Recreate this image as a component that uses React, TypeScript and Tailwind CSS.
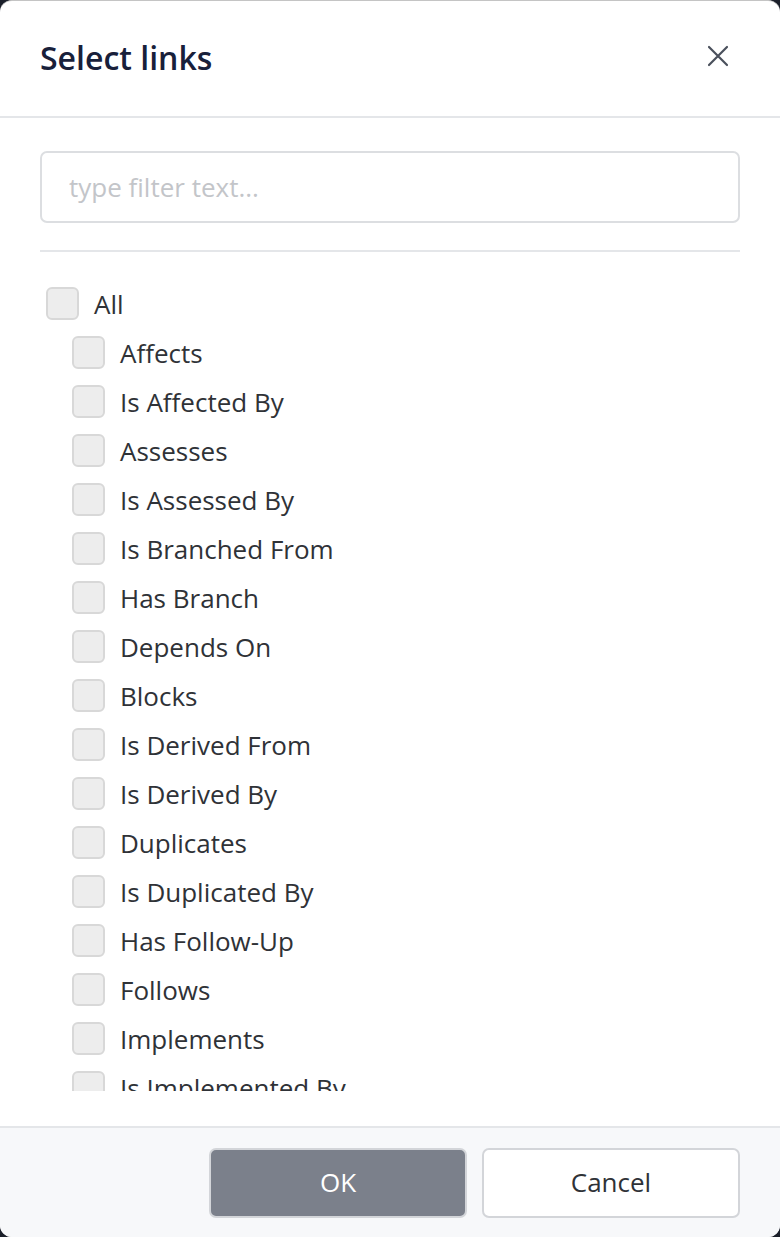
import React from "react";

const items = [
  "Affects",
  "Is Affected By",
  "Assesses",
  "Is Assessed By",
  "Is Branched From",
  "Has Branch",
  "Depends On",
  "Blocks",
  "Is Derived From",
  "Is Derived By",
  "Duplicates",
  "Is Duplicated By",
  "Has Follow-Up",
  "Follows",
  "Implements",
  "Is Implemented By",
  "Is Related To",
  "Relates To",
];

function Box() {
  return (
    <span className="block w-[33px] h-[33px] shrink-0 rounded-[6px] border-2 border-[#d8d8d8] bg-[#ededed]" />
  );
}

export default function App() {
  return (
    <div
      className="w-[780px] h-[1237px] bg-[#1b1f2a]"
      style={{ fontFamily: '"Open Sans", "Noto Sans", sans-serif' }}
    >
      <div className="w-full h-full bg-white rounded-[12px] overflow-hidden flex flex-col border-t border-[#c4c4c4]">
        <div className="h-[117px] shrink-0 px-[40px] flex items-center justify-between border-b-2 border-[#e4e6e9]">
          <h1 className="text-[32px] font-semibold text-[#18203a] leading-none -mt-[2px]">
            Select links
          </h1>
          <button className="w-[24px] h-[24px] mr-[10px] -mt-[6px] flex items-center justify-center text-[#4a505c]">
            <svg width="22" height="22" viewBox="0 0 22 22" fill="none" stroke="currentColor" strokeWidth="2.2" strokeLinecap="round">
              <path d="M2 2 L20 20 M20 2 L2 20" />
            </svg>
          </button>
        </div>

        <div className="flex-1 min-h-0 flex flex-col px-[40px] pt-[33px] pb-[35px]">
          <div className="h-[72px] shrink-0 rounded-[7px] border-2 border-[#dcdee1] flex items-center px-[27px]">
            <input
              className="w-full outline-none text-[26px] text-[#333] placeholder:text-[#c3c5c9] bg-transparent"
              placeholder="type filter text..."
            />
          </div>
          <div className="mt-[27px] h-[2px] shrink-0 bg-[#e4e6e9]" />
          <div className="mt-[27px] flex-1 min-h-0 overflow-hidden">
            <div className="h-[49px] flex items-center pl-[6px] gap-[15px]">
              <Box />
              <span className="text-[26px] leading-[36px] text-[#2f3237]">All</span>
            </div>
            {items.map((t) => (
              <div key={t} className="h-[49px] flex items-center pl-[32px] gap-[15px]">
                <Box />
                <span className="text-[26px] leading-[36px] text-[#2f3237]">{t}</span>
              </div>
            ))}
          </div>
        </div>

        <div className="h-[111px] shrink-0 bg-[#f7f8fa] border-t-2 border-[#e4e6e9] flex items-center justify-end gap-[15px] px-[40px]">
          <button className="w-[258px] h-[70px] rounded-[7px] bg-[#7b808b] border-2 border-[#d3d5d9] text-white text-[26px] font-medium">
            OK
          </button>
          <button className="w-[258px] h-[70px] rounded-[7px] bg-white border-2 border-[#d3d5d9] text-[#2f3237] text-[26px] font-medium">
            Cancel
          </button>
        </div>
      </div>
    </div>
  );
}
